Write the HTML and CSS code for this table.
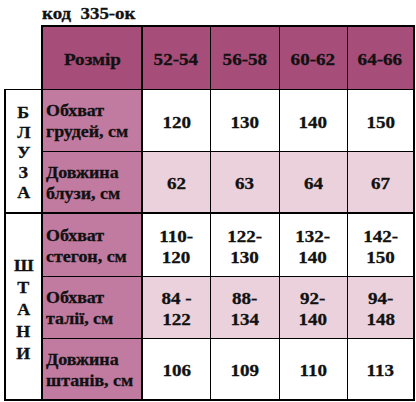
FILE: index.html
```html
<!DOCTYPE html>
<html lang="uk">
<head>
<meta charset="utf-8">
<title>код 335-ок</title>
<link rel="stylesheet" href="styles.css">
</head>
<body>
<div class="page">
  <div class="title"><span class="tt">код&nbsp;&nbsp;335-ок</span></div>
  <table class="sizes">
    <colgroup>
      <col class="c-group">
      <col class="c-label">
      <col class="c-d1">
      <col class="c-d2">
      <col class="c-d3">
      <col class="c-d4">
    </colgroup>
    <tr class="head">
      <td class="corner"></td>
      <th class="hlab"><span class="s">Розмір</span></th>
      <th><span class="s">52-54</span></th>
      <th><span class="s">56-58</span></th>
      <th><span class="s">60-62</span></th>
      <th class="last"><span class="s">64-66</span></th>
    </tr>
    <tr class="r1">
      <td class="group g1" rowspan="2"><div class="vert v1"><span>Б</span><span>Л</span><span>У</span><span>З</span><span>А</span></div></td>
      <td class="lab"><span class="ls">Обхват<br>грудей, см</span></td>
      <td><span class="s">120</span></td>
      <td><span class="s">130</span></td>
      <td><span class="s">140</span></td>
      <td class="last"><span class="s">150</span></td>
    </tr>
    <tr class="r2 pink">
      <td class="lab"><span class="ls">Довжина<br>блузи, см</span></td>
      <td><span class="s">62</span></td>
      <td><span class="s">63</span></td>
      <td><span class="s">64</span></td>
      <td class="last"><span class="s">67</span></td>
    </tr>
    <tr class="r3 sep">
      <td class="group g2" rowspan="3"><div class="vert v2"><span>Ш</span><span>Т</span><span>А</span><span>Н</span><span>И</span></div></td>
      <td class="lab"><span class="ls">Обхват<br>стегон, см</span></td>
      <td><span class="s">110-<br>120</span></td>
      <td><span class="s">122-<br>130</span></td>
      <td><span class="s">132-<br>140</span></td>
      <td class="last"><span class="s">142-<br>150</span></td>
    </tr>
    <tr class="r4 pink">
      <td class="lab"><span class="ls">Обхват<br>талії, см</span></td>
      <td><span class="s">84 -<br>122</span></td>
      <td><span class="s">88-<br>134</span></td>
      <td><span class="s">92-<br>140</span></td>
      <td class="last"><span class="s">94-<br>148</span></td>
    </tr>
    <tr class="r5 bottom">
      <td class="lab"><span class="ls">Довжина<br>штанів, см</span></td>
      <td><span class="s">106</span></td>
      <td><span class="s">109</span></td>
      <td><span class="s">110</span></td>
      <td class="last"><span class="s">113</span></td>
    </tr>
  </table>
</div>
</body>
</html>
```

FILE: styles.css
```css
html, body {
  margin: 0;
  padding: 0;
  background: #ffffff;
}

body {
  font-family: "Liberation Serif", "Times New Roman", serif;
  font-weight: bold;
  color: #111111;
  -webkit-text-stroke: 0.3px #111111;
}

.page {
  width: 416px;
  height: 402px;
  overflow: hidden;
}

.title {
  height: 25px;
  box-sizing: border-box;
  padding: 5px 0 0 42px;
  font-size: 16px;
  line-height: 18px;
}

.tt {
  display: inline-block;
  transform: scaleX(1.18);
  transform-origin: left center;
}

.sizes {
  border-collapse: collapse;
  table-layout: fixed;
  margin-left: 4px;
  width: 409px;
}

.c-group { width: 37px; }
.c-label { width: 100px; }
.c-d1 { width: 68px; }
.c-d2 { width: 69px; }
.c-d3 { width: 68px; }
.c-d4 { width: 67px; }

.sizes td,
.sizes th {
  border: 1px solid #000000;
  padding: 0;
  text-align: center;
  vertical-align: middle;
  font-size: 17px;
  line-height: 21px;
  font-weight: bold;
  background: #ffffff;
}

.s {
  display: inline-block;
  transform: scaleX(1.12);
  transform-origin: center center;
  padding-top: 3px;
}

.head th {
  background: #a64d79;
  border-top: 2px solid #000000;
  height: 62px;
}

.head th.hlab {
  border-left: 2px solid #000000;
  border-right: 2px solid #000000;
}

.sizes td.corner {
  border: none;
  background: #ffffff;
}

.sizes td.last,
.sizes th.last {
  border-right: 2px solid #000000;
}

.sizes td.lab {
  background: #c27ba0;
  text-align: left;
  padding-left: 3px;
  border-left: 2px solid #000000;
  border-right: 2px solid #000000;
  font-size: 16px;
}

.ls {
  display: inline-block;
  transform: scaleX(1.12);
  transform-origin: left center;
  padding-top: 1px;
}

.sizes tr.pink td {
  background: #ead1dc;
}

.sizes tr.pink td.lab {
  background: #c27ba0;
}

.sizes td.group {
  border-left: 2px solid #000000;
  border-right: 2px solid #000000;
  border-bottom: 2px solid #000000;
  background: #ffffff;
  font-size: 16px;
}

.r1 td { height: 61px; }
.r2 td { height: 60px; }
.r3 td { height: 62px; }
.r4 td { height: 61px; }
.r5 td { height: 60px; }

.sizes tr.sep td {
  border-top: 2px solid #000000;
}

.sizes tr.bottom td,
.sizes td.g2 {
  border-bottom: 2px solid #000000;
}

.vert {
  display: flex;
  flex-direction: column;
  align-items: center;
}

.vert span {
  display: block;
  transform: scaleX(1.12);
}

.v1 {
  line-height: 20px;
  padding-top: 4px;
}

.v2 {
  line-height: 22px;
  padding-top: 6px;
}
```
